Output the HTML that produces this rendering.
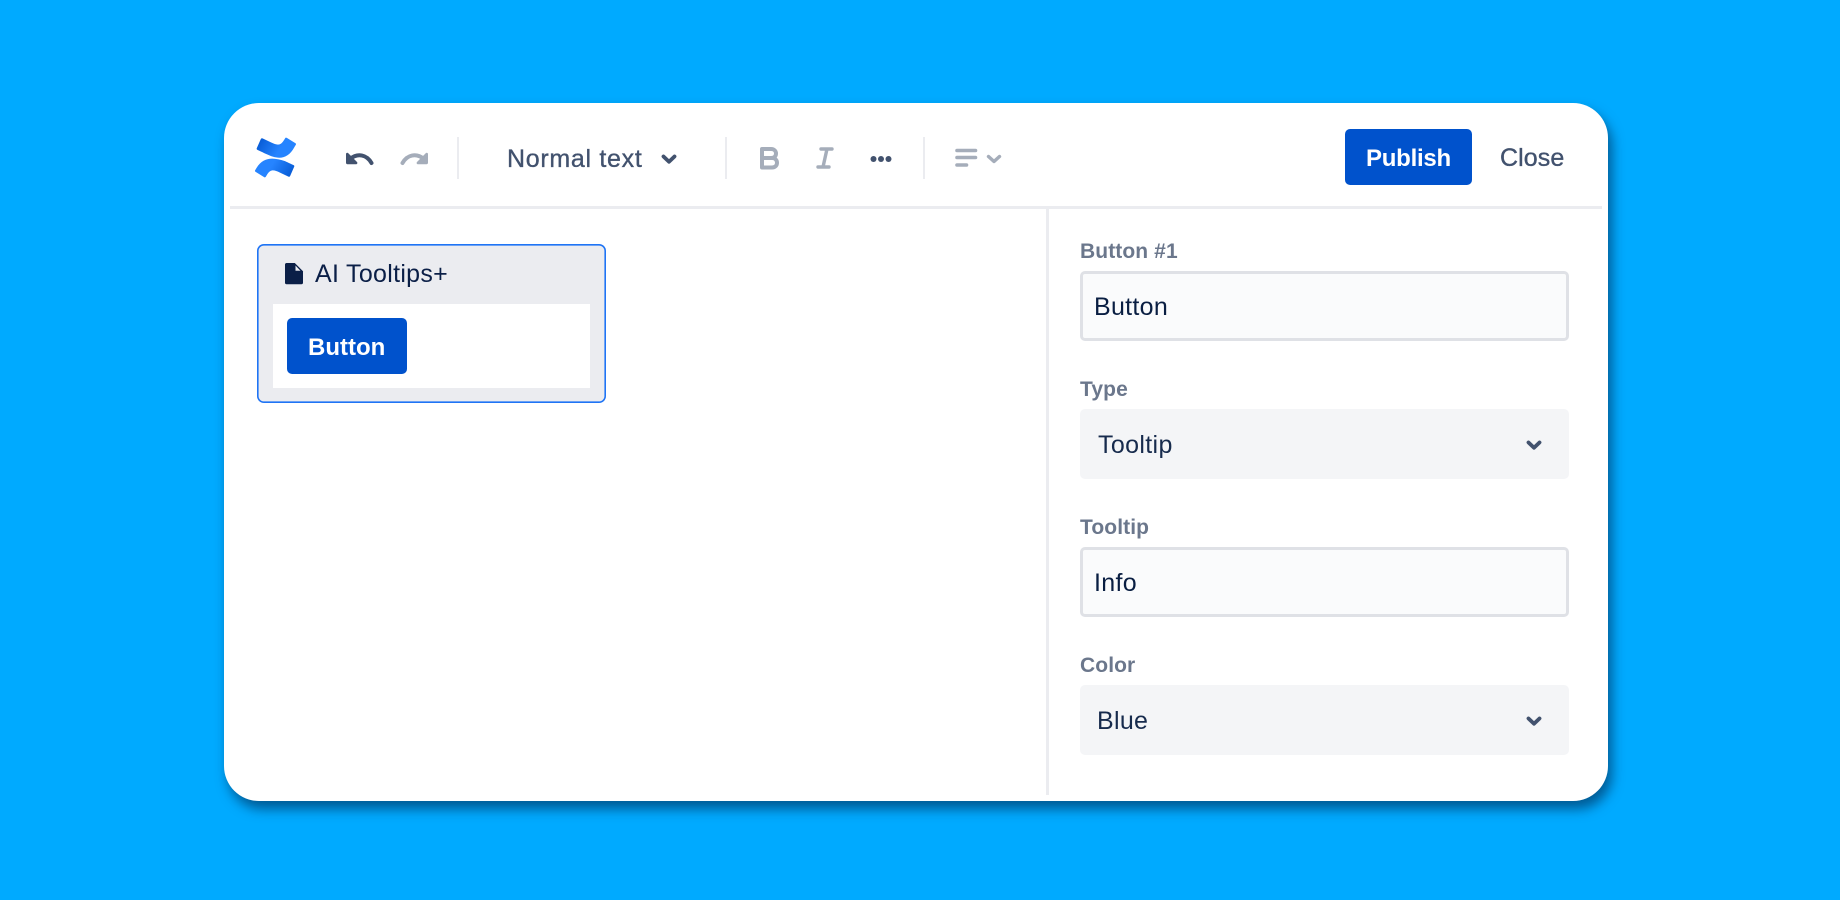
<!DOCTYPE html>
<html lang="en">
<head>
<meta charset="utf-8">
<title>AI Tooltips+</title>
<style>
html,body{margin:0;padding:0;width:1840px;height:900px;overflow:hidden;background:#00AAFF;}
body{position:relative;font-family:"Liberation Sans",sans-serif;}
.abs,.t,.l{position:absolute;}
.t{font-size:25px;line-height:24px;white-space:nowrap;color:#091E42;}
.m{color:#42526E;-webkit-text-stroke:.35px #42526E;}
.w{color:#fff;font-weight:700;font-size:24px;}
.l{font-size:21px;line-height:20px;font-weight:700;color:#6B778C;letter-spacing:.1px;white-space:nowrap;}
.card{left:224px;top:103px;width:1384px;height:698px;background:#fff;border-radius:35px;box-shadow:4px 8px 12px rgba(0,25,60,.55);}
.inp{left:1080px;width:489px;height:70px;box-sizing:border-box;background:#FAFBFC;border:3px solid #DFE1E6;border-radius:5px;}
.sel{left:1080px;width:489px;height:70px;background:#F4F5F7;border-radius:5px;}
.btn{background:#0052CC;border-radius:5px;}
svg{position:absolute;left:0;top:0;}
</style>
</head>
<body>
<div class="abs card"></div>

<div class="abs" style="left:230px;top:206px;width:1372px;height:3px;background:#EBECF0"></div>
<div class="abs" style="left:1046px;top:209px;width:3px;height:586px;background:#EBECF0"></div>
<div class="abs" style="left:457px;top:137px;width:2px;height:42px;background:#EBECF0"></div>
<div class="abs" style="left:725px;top:137px;width:2px;height:42px;background:#EBECF0"></div>
<div class="abs" style="left:923px;top:137px;width:2px;height:42px;background:#EBECF0"></div>

<span class="t m" style="left:507px;top:147px;letter-spacing:.7px">Normal text</span>

<div class="abs btn" style="left:1345px;top:129px;width:127px;height:56px"></div>
<span class="t w" style="left:1366px;top:147px;letter-spacing:-.25px">Publish</span>
<span class="t m" style="left:1500px;top:146px;letter-spacing:.1px">Close</span>

<!-- macro -->
<div class="abs" style="left:257px;top:244px;width:349px;height:159px;background:#EBECF0;box-shadow:inset 0 0 0 1.6px #1F74F5;border-radius:7px"></div>
<div class="abs" style="left:273px;top:304px;width:317px;height:84px;background:#fff"></div>
<span class="t" style="left:315px;top:262px;letter-spacing:.3px;color:#0B1F47">AI Tooltips+</span>
<div class="abs btn" style="left:287px;top:318px;width:120px;height:56px"></div>
<span class="t w" style="left:308px;top:336px">Button</span>

<!-- form -->
<span class="l" style="left:1080px;top:242px">Button #1</span>
<div class="abs inp" style="top:271px"></div>
<span class="t" style="left:1094px;top:295px;letter-spacing:.3px">Button</span>

<span class="l" style="left:1080px;top:380px">Type</span>
<div class="abs sel" style="top:409px"></div>
<span class="t" style="left:1098px;top:433px;letter-spacing:.35px;color:#172B4D">Tooltip</span>

<span class="l" style="left:1080px;top:518px">Tooltip</span>
<div class="abs inp" style="top:547px"></div>
<span class="t" style="left:1094px;top:571px;letter-spacing:.3px">Info</span>

<span class="l" style="left:1080px;top:656px">Color</span>
<div class="abs sel" style="top:685px"></div>
<span class="t" style="left:1097px;top:709px;letter-spacing:.3px;color:#172B4D">Blue</span>

<svg width="1840" height="900" viewBox="0 0 1840 900" fill="none">
  <defs>
    <linearGradient id="g1" gradientUnits="userSpaceOnUse" x1="31" y1="33" x2="13" y2="22">
      <stop offset="0" stop-color="#0052CC"/><stop offset="1" stop-color="#2684FF"/>
    </linearGradient>
    <linearGradient id="g2" gradientUnits="userSpaceOnUse" x1="1" y1="-1" x2="19" y2="10">
      <stop offset="0" stop-color="#0052CC"/><stop offset="1" stop-color="#2684FF"/>
    </linearGradient>
  </defs>
  <!-- logo -->
  <g transform="translate(255 137) scale(1.28)">
    <path fill="url(#g1)" d="M1.160 24.200c-.33.53-.7 1.150-1.010 1.650a1 1 0 0 0 .34 1.370l6.640 4.080a1 1 0 0 0 1.380-.33c.27-.44.61-1.020.98-1.630 2.630-4.340 5.270-3.810 10.030-1.540l6.580 3.130a1 1 0 0 0 1.340-.5l3.160-7.150a1 1 0 0 0-.5-1.310c-1.390-.65-4.150-1.950-6.640-3.150C14.970 16.200 6.960 14.970 1.160 24.200Z"/>
    <path fill="url(#g2)" d="M30.840 7.800c.33-.53.7-1.150 1.010-1.650a1 1 0 0 0-.34-1.370L24.870.7a1 1 0 0 0-1.380.33c-.27.44-.61 1.020-.98 1.630-2.630 4.340-5.270 3.810-10.030 1.540L5.900 1.070a1 1 0 0 0-1.340.5L1.400 8.720a1 1 0 0 0 .5 1.310c1.390.65 4.150 1.950 6.640 3.150 8.520 4.120 16.530 5.350 22.300-5.380Z"/>
  </g>
  <!-- undo -->
  <path d="M371.500 163C367 155 358 152.500 350 159" stroke="#42526E" stroke-width="4" stroke-linecap="round"/>
  <path d="M346 154C346 152.800 347.500 152.400 348.300 153.200L357 162C357.800 162.800 357.300 164.300 356 164.300H347.500C346.600 164.300 346 163.600 346 162.800Z" fill="#42526E"/>
  <!-- redo -->
  <path d="M402.500 163C407 155 416 152.500 424 159" stroke="#A5ADBA" stroke-width="4" stroke-linecap="round"/>
  <path d="M428 154C428 152.800 426.500 152.400 425.700 153.200L417 162C416.200 162.800 416.700 164.300 418 164.300H426.500C427.400 164.300 428 163.600 428 162.800Z" fill="#A5ADBA"/>
  <!-- chevrons -->
  <path d="M663.500 156.500L669 161.800L674.500 156.500" stroke="#42526E" stroke-width="3.800" stroke-linecap="round" stroke-linejoin="round"/>
  <path d="M988.500 156.500L994 161.500L999.500 156.500" stroke="#A5ADBA" stroke-width="3.400" stroke-linecap="round" stroke-linejoin="round"/>
  <path d="M1528.500 442.500L1534 447.800L1539.500 442.500" stroke="#42526E" stroke-width="3.800" stroke-linecap="round" stroke-linejoin="round"/>
  <path d="M1528.500 718.500L1534 723.800L1539.500 718.500" stroke="#42526E" stroke-width="3.800" stroke-linecap="round" stroke-linejoin="round"/>
  <!-- bold -->
  <path d="M762 149H771C774.500 149 776 151.500 776 153.500C776 156 774.500 158 771 158H762ZM762 158H772C775.500 158 777 160.500 777 162.800C777 165.200 775.500 167.500 772 167.500H762Z" stroke="#A5ADBA" stroke-width="4" stroke-linejoin="round"/>
  <!-- italic -->
  <path d="M821 149H832M818 167H829M827 149L823 167" stroke="#A5ADBA" stroke-width="3.400" stroke-linecap="round"/>
  <!-- dots -->
  <circle cx="873.500" cy="159" r="3" fill="#42526E"/>
  <circle cx="881" cy="159" r="3" fill="#42526E"/>
  <circle cx="888.500" cy="159" r="3" fill="#42526E"/>
  <!-- align -->
  <path d="M957 150.500H975.500M957 157.500H975.500M957 165H966.500" stroke="#A5ADBA" stroke-width="3.600" stroke-linecap="round"/>
  <!-- file -->
  <path d="M286.500 263H294.800L303 271.300V282.800C303 283.700 302.300 284.300 301.500 284.300H286.500C285.700 284.300 285 283.700 285 282.800V264.500C285 263.700 285.700 263 286.500 263Z" fill="#0B1F47"/>
  <path d="M295.500 265.500L300.500 270.800H295.500Z" fill="#EBECF0"/>
</svg>
</body>
</html>
